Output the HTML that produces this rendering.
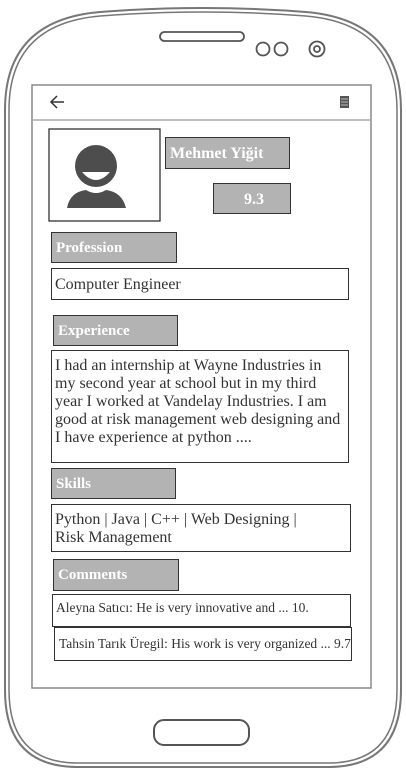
<!DOCTYPE html>
<html><head><style>
body{margin:0;width:406px;height:772px;background:#fff;position:relative;overflow:hidden;font-family:"Liberation Serif",serif;}
.a{position:absolute;box-sizing:border-box;}
.lab{background:#b3b3b3;border:1.5px solid #333;color:#fff;font-weight:bold;font-size:15px;padding-left:4px;line-height:30px;}
.box{border:1.3px solid #333;color:#333;font-size:16px;padding:2px 3px;line-height:18px;background:#fff;}
</style></head><body>
<svg class="a" style="left:0;top:0" width="406" height="772">
<path d="M5 110 Q5 20 100 12 Q203 4 306 12 Q401 20 401 110 V690 Q401 766 330 767 H76 Q5 766 5 690 Z" fill="none" stroke="#777" stroke-width="2"/>
<path d="M9 110 Q9 24 100 16 Q203 8 306 16 Q397 24 397 110 V690 Q397 762 330 763 H76 Q9 762 9 690 Z" fill="none" stroke="#777" stroke-width="1.5"/>
<rect x="32" y="85" width="339" height="603" fill="#fff" stroke="#888" stroke-width="1.5"/>
<line x1="32" y1="120" x2="371" y2="120" stroke="#aaa" stroke-width="1.5"/>
<rect x="160" y="32" width="84" height="9" rx="4.5" fill="none" stroke="#555" stroke-width="1.8"/>
<circle cx="263" cy="49" r="6.5" fill="none" stroke="#555" stroke-width="1.8"/>
<circle cx="281" cy="49" r="6.5" fill="none" stroke="#555" stroke-width="1.8"/>
<circle cx="317" cy="49" r="7.5" fill="none" stroke="#555" stroke-width="1.8"/>
<circle cx="317" cy="49" r="3" fill="none" stroke="#555" stroke-width="1.8"/>
<rect x="154" y="720" width="95" height="25" rx="10" fill="none" stroke="#555" stroke-width="2"/>
<path d="M64 102 H51 M57 96 L51 102 L57 108" fill="none" stroke="#333" stroke-width="1.5"/>
<rect x="340" y="96" width="9" height="12" fill="#555"/>
<path d="M341 99h7M341 102h7M341 105h7" stroke="#bbb" stroke-width="1"/>
<rect x="49" y="129" width="111" height="92" fill="none" stroke="#333" stroke-width="1.3"/>
<circle cx="96" cy="166" r="21" fill="#4d4d4d"/>
<path d="M82 172 Q96 188 110 172 Z" fill="#fff"/>
<path d="M67 208 Q70 192 86 190 Q96 196 106 190 Q122 192 126 208 Z" fill="#4d4d4d"/>
</svg>
<div class="a lab" style="left:165px;top:137px;width:125px;height:32px;line-height:32px;font-size:16px">Mehmet Yiğit</div>
<div class="a lab" style="left:213px;top:183px;width:78px;height:31px;line-height:31px;text-align:center;font-size:16px">9.3</div>
<div class="a lab" style="left:51px;top:232px;width:126px;height:31px">Profession</div>
<div class="a box" style="left:51px;top:268px;width:298px;height:32px;line-height:28px">Computer Engineer</div>
<div class="a lab" style="left:53px;top:315px;width:125px;height:31px">Experience</div>
<div class="a box" style="left:51px;top:350px;width:298px;height:113px;padding-top:6px">I had an internship at Wayne Industries in my second year at school but in my third year I worked at Vandelay Industries. I am good at risk management web designing and I have experience at python ....</div>
<div class="a lab" style="left:51px;top:468px;width:125px;height:31px">Skills</div>
<div class="a box" style="left:51px;top:504px;width:300px;height:48px;padding-top:6px;padding-right:40px">Python | Java | C++ | Web Designing | Risk Management</div>
<div class="a lab" style="left:53px;top:559px;width:126px;height:32px">Comments</div>
<div class="a box" style="left:52px;top:594px;width:299px;height:33px;font-size:13.5px;line-height:22px;padding-left:3px">Aleyna Satıcı: He is very innovative and ... 10.</div>
<div class="a box" style="left:54px;top:627px;width:298px;height:34px;font-size:13.5px;line-height:28px;padding-left:4px;white-space:nowrap;overflow:hidden">Tahsin Tarık Üregil: His work is very organized ... 9.7</div>
</body></html>
